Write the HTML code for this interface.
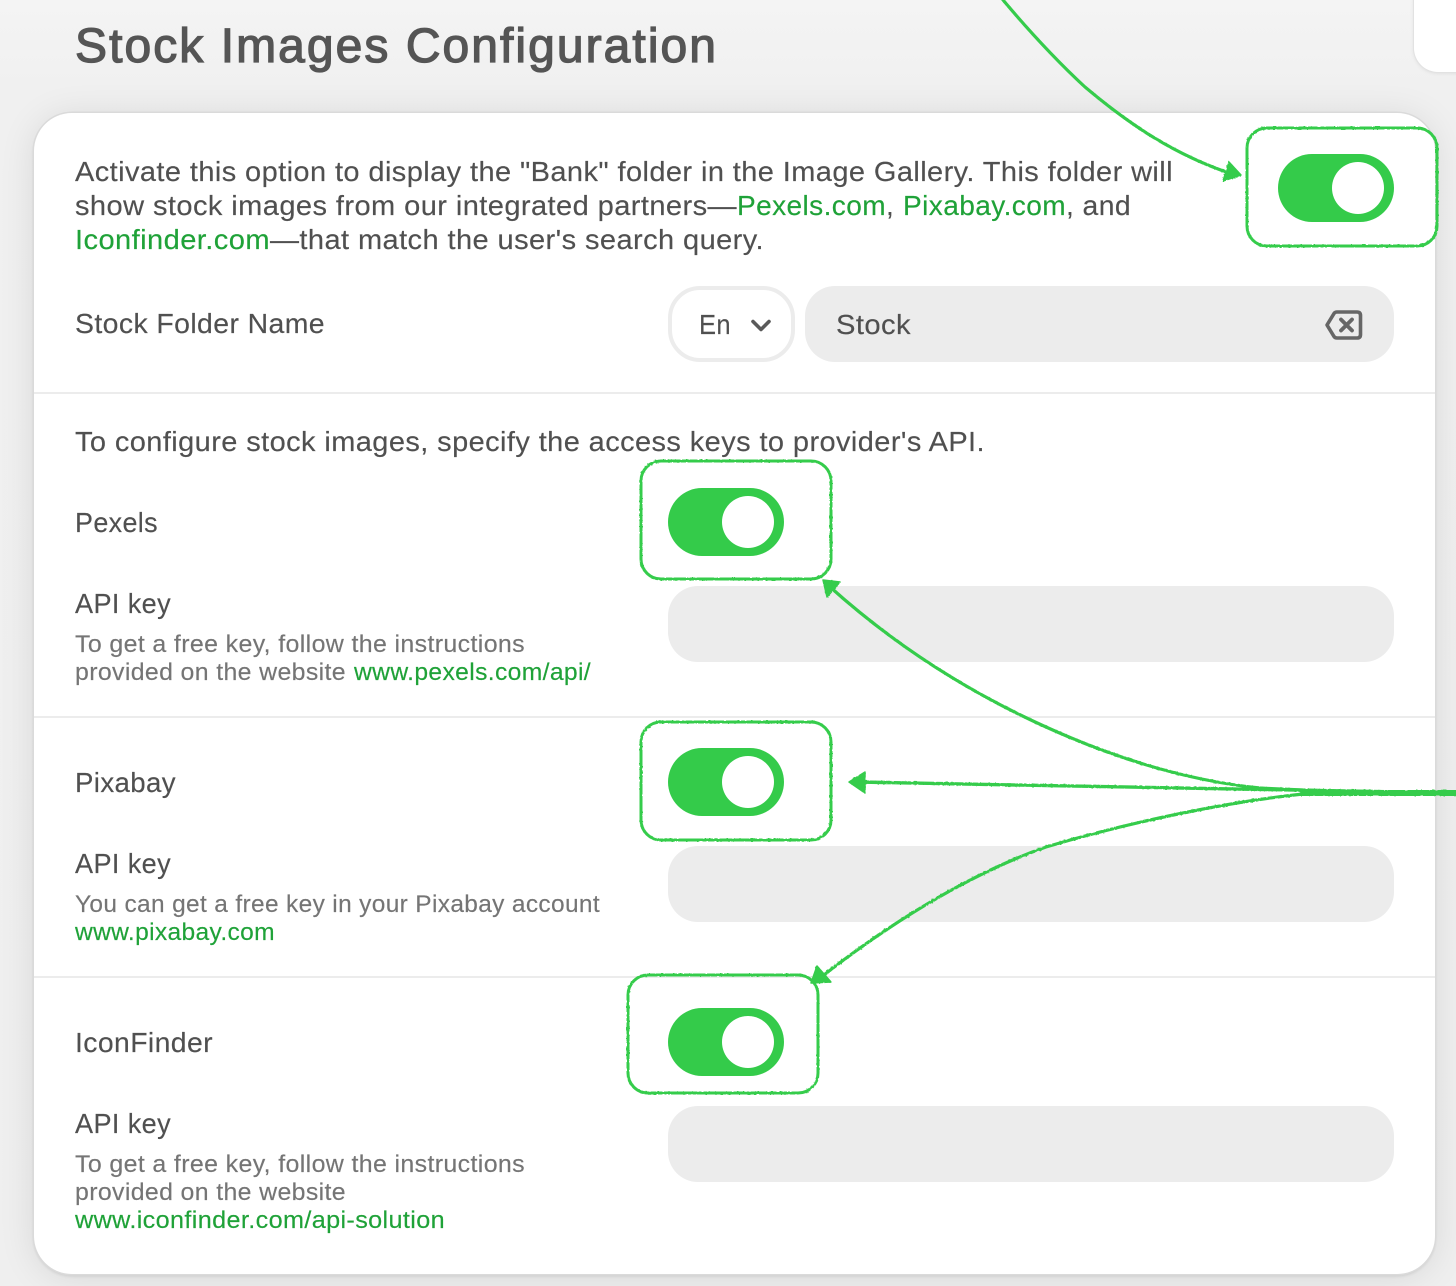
<!DOCTYPE html>
<html lang="en">
<head>
<meta charset="utf-8">
<title>Stock Images Configuration</title>
<style>
html,body{margin:0;padding:0;width:1456px;height:1286px;overflow:hidden;background:#f0f0f0;}
body{position:relative;background:linear-gradient(180deg,#f4f4f4 0,#f0f0f0 90px,#efefef 100%);}
.card{position:absolute;left:34px;top:113px;width:1401px;height:1161px;background:#fff;border-radius:38px;box-shadow:0 0 0 1.5px #dadada,0 2px 3px rgba(0,0,0,.12),0 3px 36px rgba(0,0,0,.1);}
.corner{position:absolute;left:1414px;top:-30px;width:80px;height:102px;background:#fff;border-radius:24px;box-shadow:0 0 0 1px #e2e2e2,0 1px 4px rgba(0,0,0,.1);}
svg{position:absolute;left:0;top:0;}
text{font-family:"Liberation Sans",sans-serif;font-size:28px;fill:#505050;stroke:#505050;stroke-width:.15px;letter-spacing:.4px;}
.s{font-size:24.5px;fill:#757575;stroke:#757575;letter-spacing:.35px;}
.g{fill:#1fa238;stroke:#1fa238;}
.gs{font-size:24.5px;fill:#1fa238;stroke:#1fa238;letter-spacing:.35px;}
.h{font-size:48px;fill:#555;stroke:#555;stroke-width:1.300px;letter-spacing:0;}
</style>
</head>
<body>
<div class="corner"></div>
<div class="card"></div>
<svg width="1456" height="1286" viewBox="0 0 1456 1286" xmlns="http://www.w3.org/2000/svg">
<defs>
<filter id="rough" x="-5%" y="-5%" width="110%" height="110%">
<feTurbulence type="fractalNoise" baseFrequency="0.35" numOctaves="2" seed="3"/>
<feDisplacementMap in="SourceGraphic" scale="1.6"/>
</filter>
</defs>

<!-- separators -->
<rect x="34" y="392" width="1401" height="2" fill="#ececec"/>
<rect x="34" y="716" width="1401" height="2" fill="#ececec"/>
<rect x="34" y="976" width="1401" height="2" fill="#ececec"/>

<!-- inputs -->
<rect x="670" y="288" width="123" height="72" rx="30" fill="#fff" stroke="#ececec" stroke-width="4"/>
<path d="M753 321.500L761 329.500L769 321.500" fill="none" stroke="#5a5a5a" stroke-width="3.600" stroke-linecap="round" stroke-linejoin="round"/>
<rect x="805" y="286" width="589" height="76" rx="30" fill="#ececec"/>
<path d="M1337 312H1357Q1360.500 312 1360.500 315.500V334.500Q1360.500 338 1357 338H1337Q1335 338 1334 336.500L1327 325L1334 313.500Q1335 312 1337 312Z" fill="none" stroke="#666" stroke-width="3.600" stroke-linejoin="round"/>
<path d="M1341 319.500L1352 330.500M1352 319.500L1341 330.500" fill="none" stroke="#666" stroke-width="3.800" stroke-linecap="round"/>
<rect x="668" y="586" width="726" height="76" rx="30" fill="#ececec"/>
<rect x="668" y="846" width="726" height="76" rx="30" fill="#ececec"/>
<rect x="668" y="1106" width="726" height="76" rx="30" fill="#ececec"/>

<!-- toggles -->
<rect x="1278" y="154" width="116" height="68" rx="34" fill="#34cb4a"/>
<circle cx="1358" cy="188" r="26" fill="#fff"/>
<rect x="668" y="488" width="116" height="68" rx="34" fill="#34cb4a"/>
<circle cx="748" cy="522" r="26" fill="#fff"/>
<rect x="668" y="748" width="116" height="68" rx="34" fill="#34cb4a"/>
<circle cx="748" cy="782" r="26" fill="#fff"/>
<rect x="668" y="1008" width="116" height="68" rx="34" fill="#34cb4a"/>
<circle cx="748" cy="1042" r="26" fill="#fff"/>

<!-- text -->
<text class="h" x="75" y="62" textLength="641" lengthAdjust="spacing">Stock Images Configuration</text>
<text x="75" y="181" textLength="1098" lengthAdjust="spacingAndGlyphs">Activate this option to display the "Bank" folder in the Image Gallery. This folder will</text>
<text x="75" y="215" textLength="662" lengthAdjust="spacingAndGlyphs">show stock images from our integrated partners—</text>
<text class="g" x="737" y="215" textLength="149" lengthAdjust="spacingAndGlyphs">Pexels.com</text>
<text x="886" y="215">,</text>
<text class="g" x="903" y="215" textLength="163" lengthAdjust="spacingAndGlyphs">Pixabay.com</text>
<text x="1066" y="215" textLength="65" lengthAdjust="spacingAndGlyphs">, and</text>
<text class="g" x="75" y="249" textLength="195" lengthAdjust="spacingAndGlyphs">Iconfinder.com</text>
<text x="270" y="249" textLength="494" lengthAdjust="spacingAndGlyphs">—that match the user's search query.</text>
<text x="75" y="333" textLength="250" lengthAdjust="spacingAndGlyphs">Stock Folder Name</text>
<text x="699" y="334" textLength="32" lengthAdjust="spacingAndGlyphs">En</text>
<text x="836" y="334" textLength="75" lengthAdjust="spacingAndGlyphs">Stock</text>
<text x="75" y="451" textLength="910" lengthAdjust="spacingAndGlyphs">To configure stock images, specify the access keys to provider's API.</text>

<text x="75" y="532" textLength="83" lengthAdjust="spacingAndGlyphs">Pexels</text>
<text x="75" y="613" textLength="96" lengthAdjust="spacingAndGlyphs">API key</text>
<text class="s" x="75" y="652" textLength="450" lengthAdjust="spacingAndGlyphs">To get a free key, follow the instructions</text>
<text class="s" x="75" y="680" textLength="271" lengthAdjust="spacingAndGlyphs">provided on the website</text>
<text class="gs" x="354" y="680" textLength="237" lengthAdjust="spacingAndGlyphs">www.pexels.com/api/</text>

<text x="75" y="792" textLength="101" lengthAdjust="spacingAndGlyphs">Pixabay</text>
<text x="75" y="873" textLength="96" lengthAdjust="spacingAndGlyphs">API key</text>
<text class="s" x="75" y="912" textLength="525" lengthAdjust="spacingAndGlyphs">You can get a free key in your Pixabay account</text>
<text class="gs" x="75" y="940" textLength="200" lengthAdjust="spacingAndGlyphs">www.pixabay.com</text>

<text x="75" y="1052" textLength="138" lengthAdjust="spacingAndGlyphs">IconFinder</text>
<text x="75" y="1133" textLength="96" lengthAdjust="spacingAndGlyphs">API key</text>
<text class="s" x="75" y="1172" textLength="450" lengthAdjust="spacingAndGlyphs">To get a free key, follow the instructions</text>
<text class="s" x="75" y="1200" textLength="271" lengthAdjust="spacingAndGlyphs">provided on the website</text>
<text class="gs" x="75" y="1228" textLength="370" lengthAdjust="spacingAndGlyphs">www.iconfinder.com/api-solution</text>

<!-- hand-drawn annotations -->
<g filter="url(#rough)" fill="none" stroke="#36cc4c" stroke-width="3" stroke-linecap="round" stroke-linejoin="round">
<rect x="1247" y="128" width="190" height="118" rx="20"/>
<rect x="641" y="461" width="190" height="118" rx="20"/>
<rect x="641" y="722" width="190" height="118" rx="20"/>
<rect x="628" y="975" width="190" height="118" rx="20"/>
<path d="M1003 0C1030 32 1058 62 1085 87C1130 125 1175 155 1232 174" stroke-width="3.200"/>
<path d="M1456 793C1400 792 1330 792 1260 788C1200 782 1130 765 1046 727C975 695 900 650 829 586" stroke-width="3.200"/>
<path d="M1456 793C1300 790 1060 786 858 782" stroke-width="3.400"/>
<path d="M1456 794C1400 794 1350 791 1313 793C1230 801 1130 822 1046 847C980 870 900 915 820 978" stroke-width="3.200"/>
</g>
<g filter="url(#rough)" fill="#36cc4c" stroke="#36cc4c" stroke-width="1.500" stroke-linejoin="round">
<path d="M1241 175L1229 162L1223 181Z"/>
<path d="M823 580L827 597L840 582Z"/>
<path d="M849 782L865 772L865 793Z"/>
<path d="M817 966L831 982L811 983Z"/>
<path d="M1300 790L1456 790L1456 796L1300 796Z" stroke="none"/>
</g>
</svg>
</body>
</html>
